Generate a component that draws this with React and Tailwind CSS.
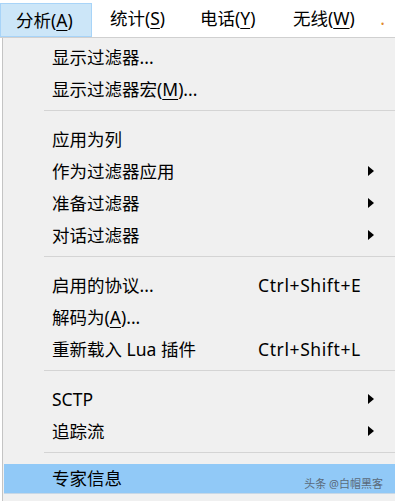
import React from "react";

const font = { fontFamily: '"Noto Sans", "Noto Sans CJK SC", sans-serif' };

function Arrow() {
  return (
    <svg width="6" height="10" viewBox="0 0 6 10" className="block">
      <path d="M0 0 L6 5 L0 10 Z" fill="#000" />
    </svg>
  );
}

function Row({ label, shortcut, sub }) {
  return (
    <div className="flex h-8 items-center text-[17.5px] text-black">
      <div className="w-[255px] pl-[49px] whitespace-nowrap">{label}</div>
      <div className="flex-1 whitespace-nowrap tracking-[0.6px]">{shortcut}</div>
      <div className="w-[6px] mr-[21px]">{sub && <Arrow />}</div>
    </div>
  );
}

function Sep({ h = "h-[18px]" }) {
  return (
    <div className={`${h} pt-[5px] pl-[41px]`}>
      <div className="border-t border-[#d4d4d4]" />
    </div>
  );
}

const U = ({ children }) => <span className="underline underline-offset-[3px] decoration-1">{children}</span>;

export default function App() {
  return (
    <div className="w-[395px] h-[501px] overflow-hidden bg-white" style={font}>
      {/* menu bar */}
      <div className="flex h-[38px] border-b border-[#d0d0d0] text-[17.5px] text-black">
        <div className="mt-[3px] h-[34px] w-[92px] border border-[#a8d4f8] bg-[#cce6f8] pl-[15px] flex items-center whitespace-nowrap">
          分析(<U>A</U>)
        </div>
        <div className="w-[90px] pl-[18px] flex items-center whitespace-nowrap">统计(<U>S</U>)</div>
        <div className="w-[93px] pl-[18px] flex items-center whitespace-nowrap">电话(<U>Y</U>)</div>
        <div className="w-[100px] pl-[18px] flex items-center whitespace-nowrap">
          无线(<U>W</U>)
          <span className="ml-auto mr-[-10px] text-[#e08a2c]">.</span>
        </div>
      </div>

      {/* dropdown */}
      <div className="ml-[2px] border-l border-[#c4c4c4] bg-[#f0f0f0] pt-[3px] h-[463px]">
        <Row label="显示过滤器..." />
        <Row label={<>显示过滤器宏(<U>M</U>)...</>} />
        <Sep />
        <Row label="应用为列" />
        <Row label="作为过滤器应用" sub />
        <Row label="准备过滤器" sub />
        <Row label="对话过滤器" sub />
        <Sep />
        <Row label="启用的协议..." shortcut="Ctrl+Shift+E" />
        <Row label={<>解码为(<U>A</U>)...</>} />
        <Row label="重新载入 Lua 插件" shortcut="Ctrl+Shift+L" />
        <Sep />
        <Row label="SCTP" sub />
        <Row label="追踪流" sub />
        <Sep h="h-[17px]" />
        <div className="ml-[1px] flex h-[30px] items-center bg-[#91c9f7] border-b border-[#c8d8e6] text-[17.5px] text-black">
          <div className="pl-[48px] whitespace-nowrap">专家信息</div>
          <div className="ml-auto mr-[12px] mt-[12px] text-[11px] text-[#5a6a7a] whitespace-nowrap">头条 @白帽黑客</div>
        </div>
      </div>
    </div>
  );
}
